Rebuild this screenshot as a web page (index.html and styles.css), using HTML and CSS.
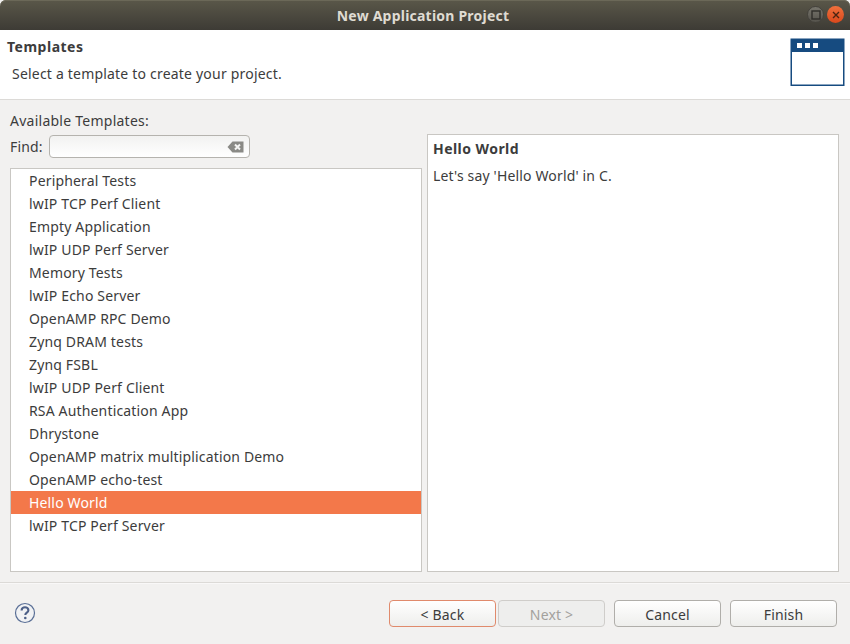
FILE: index.html
```html
<!DOCTYPE html>
<html lang="en">
<head>
<meta charset="utf-8">
<title>New Application Project</title>
<link rel="stylesheet" href="styles.css">
</head>
<body>
<div class="window">
  <header class="titlebar">
    <span class="title">New Application Project</span>
    <div class="controls">
      <span class="ctl ctl-max"><svg width="12" height="12" viewBox="0 0 12 12"><rect x="2" y="2" width="8" height="8" fill="none" stroke="#2f2e2a" stroke-width="1.4"/></svg></span>
      <span class="ctl ctl-close"><svg width="12" height="12" viewBox="0 0 12 12"><path d="M3 3l6 6M9 3l-6 6" stroke="#4a2412" stroke-width="1.4" fill="none"/></svg></span>
    </div>
  </header>
  <section class="banner">
    <div class="banner-text">
      <div class="banner-title">Templates</div>
      <div class="banner-desc">Select a template to create your project.</div>
    </div>
    <svg class="banner-icon" width="55" height="48" viewBox="0 0 55 48">
      <rect x="0.5" y="0.5" width="54" height="47.5" fill="#164b80"/>
      <rect x="2" y="14" width="51" height="32.5" fill="#fff"/>
      <rect x="7" y="5" width="5" height="5" fill="#fff"/>
      <rect x="15" y="5" width="5" height="5" fill="#fff"/>
      <rect x="23" y="5" width="5" height="5" fill="#fff"/>
    </svg>
  </section>
  <main class="content">
    <div class="left">
      <div class="avail">Available Templates:</div>
      <div class="find-row">
        <label class="find-label">Find:</label>
        <div class="find-box">
          <svg width="17" height="12" viewBox="0 0 17 12"><path d="M0.5 6L5.5 0.5H16.5V11.5H5.5Z" fill="#8a8a86"/><path d="M8 3.5l5 5M13 3.5l-5 5" stroke="#f4f4f2" stroke-width="2" fill="none"/></svg>
        </div>
      </div>
      <ul class="tree">
        <li>Peripheral Tests</li>
        <li>lwIP TCP Perf Client</li>
        <li>Empty Application</li>
        <li>lwIP UDP Perf Server</li>
        <li>Memory Tests</li>
        <li>lwIP Echo Server</li>
        <li>OpenAMP RPC Demo</li>
        <li>Zynq DRAM tests</li>
        <li>Zynq FSBL</li>
        <li>lwIP UDP Perf Client</li>
        <li>RSA Authentication App</li>
        <li>Dhrystone</li>
        <li>OpenAMP matrix multiplication Demo</li>
        <li>OpenAMP echo-test</li>
        <li class="selected">Hello World</li>
        <li>lwIP TCP Perf Server</li>
      </ul>
    </div>
    <aside class="details">
      <div class="details-title">Hello World</div>
      <div class="details-desc">Let's say 'Hello World' in C.</div>
    </aside>
  </main>
  <footer class="footer">
    <svg class="help" width="22" height="22" viewBox="0 0 22 22">
      <circle cx="11" cy="11" r="9.5" fill="#f1f2f4" stroke="#5a6f96" stroke-width="1.2"/>
      <path d="M7.6 8.4c0-2 1.5-3.1 3.4-3.1s3.4 1.1 3.4 2.9c0 2.4-3.1 2.4-3.1 4.8" fill="none" stroke="#4d6088" stroke-width="2.1"/>
      <circle cx="11.3" cy="16" r="1.3" fill="#4d6088"/>
    </svg>
    <div class="buttons">
      <div class="nav-group">
        <button class="btn btn-default">&lt; Back</button>
        <button class="btn" disabled>Next &gt;</button>
      </div>
      <button class="btn">Cancel</button>
      <button class="btn">Finish</button>
    </div>
  </footer>
</div>
</body>
</html>
```
FILE: styles.css
```css
* { box-sizing: border-box; }
html, body { margin: 0; padding: 0; }
body {
  width: 850px;
  height: 644px;
  overflow: hidden;
  background: #f2f1f0;
  font-family: "Noto Sans", sans-serif;
  font-size: 14px;
  letter-spacing: 0.16px;
  color: #3c3c3c;
}
.window { display: flex; flex-direction: column; height: 644px; }

.titlebar {
  height: 30px;
  flex: none;
  display: flex;
  align-items: center;
  justify-content: center;
  position: relative;
  padding-right: 4px;
  background: linear-gradient(#5a5749, #3d3b35);
  border-radius: 6px 6px 0 0;
  box-shadow: inset 0 1px 0 #6b6858;
}
.title { color: #dfdbd2; font-weight: 700; font-size: 14px; letter-spacing: 0.22px; }
.controls { position: absolute; right: 6px; top: 6px; display: flex; gap: 3px; }
.ctl { width: 17px; height: 17px; border-radius: 50%; display: flex; align-items: center; justify-content: center; }
.ctl-max { background: linear-gradient(#77756c, #55534c); border: 1px solid #44423c; }
.ctl-close { background: linear-gradient(#f0703c, #d9481c); }

.banner {
  height: 70px;
  flex: none;
  background: #fff;
  border-bottom: 1px solid #dcdad7;
  display: flex;
  justify-content: space-between;
  padding: 8px 5px 0 7px;
}
.banner-title { font-weight: 700; line-height: 17px; letter-spacing: 0.5px; }
.banner-desc { margin: 10px 0 0 5px; line-height: 18px; letter-spacing: 0.2px; }

.content {
  flex: none;
  height: 472px;
  display: flex;
  gap: 5px;
  padding: 0 11px 0 10px;
}
.left { width: 412px; display: flex; flex-direction: column; }
.avail { margin-top: 11px; line-height: 20px; letter-spacing: 0.25px; }
.find-row { display: flex; align-items: center; gap: 6px; margin-top: 4px; height: 23px; }
.find-label { line-height: 20px; }
.find-box {
  width: 201px;
  height: 23px;
  border: 1px solid #b5b3ae;
  border-radius: 4px;
  background: linear-gradient(#f2f2f1, #fff);
  display: flex;
  align-items: center;
  justify-content: flex-end;
  padding-right: 5px;
}
.tree {
  list-style: none;
  margin: 10px 0 0;
  padding: 0;
  height: 404px;
  background: #fff;
  border: 1px solid #c9c7c3;
}
.tree li { height: 23px; line-height: 23px; padding-left: 18px; white-space: nowrap; }
.tree li.selected { background: #f3784a; color: #fff; }

.details {
  width: 412px;
  height: 438px;
  margin-top: 34px;
  background: #fff;
  border: 1px solid #c9c7c3;
  padding: 5px;
}
.details-title { font-weight: 700; line-height: 18px; letter-spacing: 0.45px; }
.details-desc { margin-top: 9px; line-height: 18px; }

.footer {
  flex: 1;
  margin-top: 10px;
  border-top: 1px solid #dcdad7;
  box-shadow: inset 0 1px 0 #f9f8f8;
  display: flex;
  justify-content: space-between;
  padding: 17px 13px 0 14px;
}
.help { margin-top: 2px; }
.buttons { display: flex; gap: 9px; }
.nav-group { display: flex; gap: 2px; }
.btn {
  width: 107px;
  height: 27px;
  padding: 2px 0 0;
  border: 1px solid #b0aeaa;
  border-radius: 4px;
  background: linear-gradient(#ffffff, #eeeeec);
  font: inherit;
  letter-spacing: inherit;
  color: #3c3c3c;
}
.btn-default { border-color: #e08a6c; }
.btn:disabled { background: #eeeeed; border-color: #cfcdca; color: #a3a19d; }
```
